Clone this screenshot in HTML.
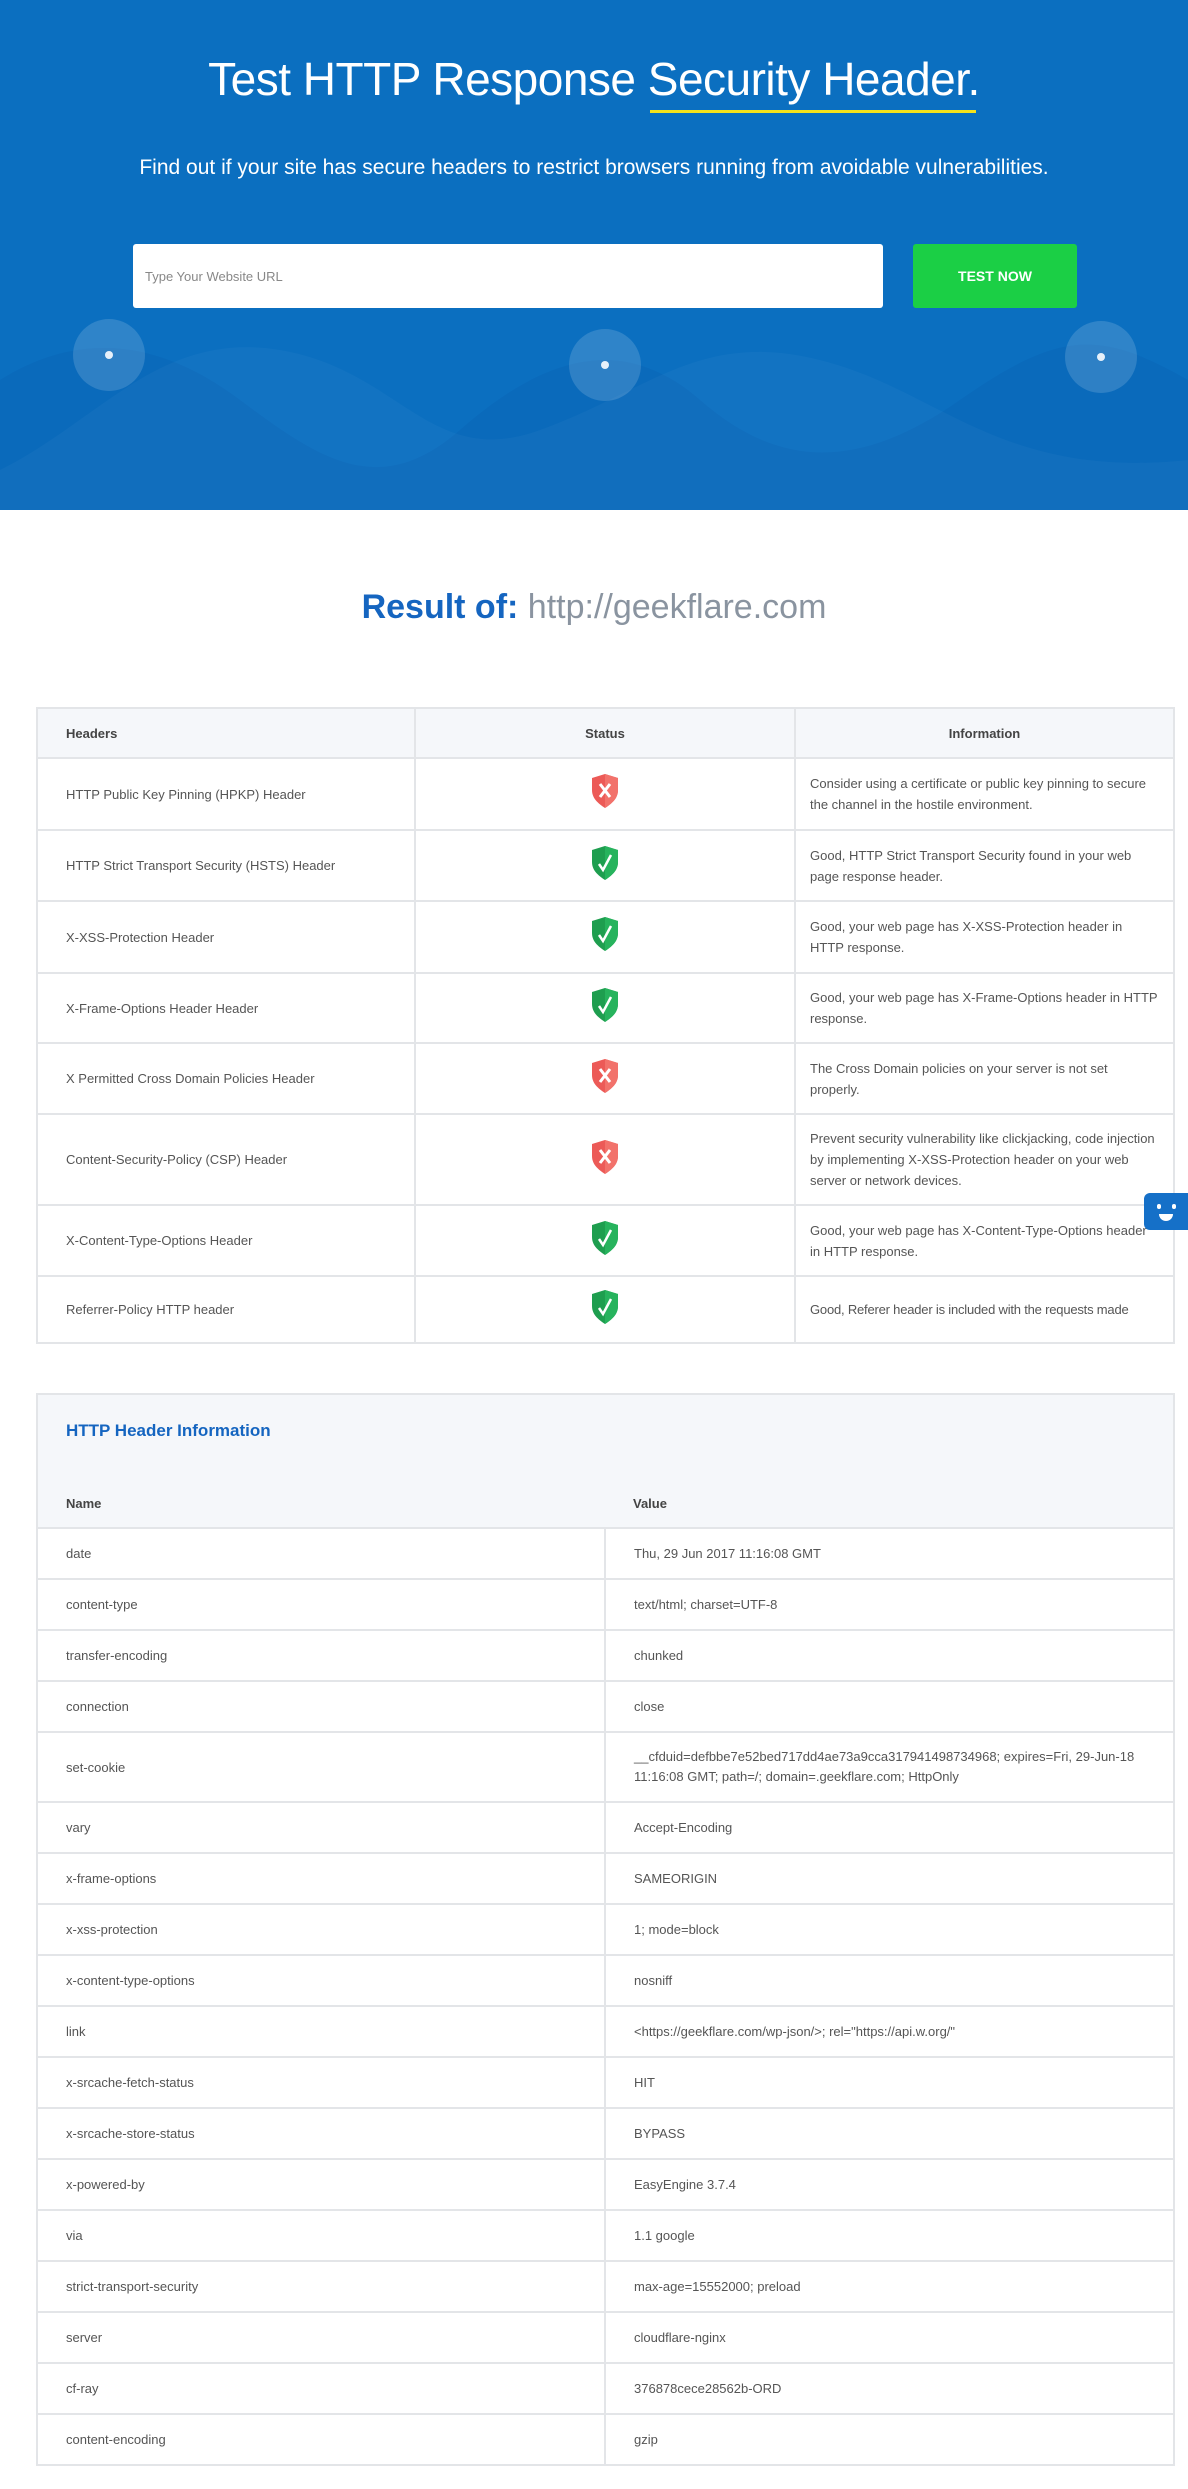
<!DOCTYPE html>
<html><head><meta charset="utf-8"><style>
*{box-sizing:border-box;margin:0;padding:0}
body{width:1188px;height:2489px;background:#fff;font-family:"Liberation Sans",sans-serif;color:#555;position:relative;overflow:hidden}
.hero{position:absolute;left:0;top:0;width:1188px;height:510px;background:#0b6fc0;overflow:hidden}
h1{position:absolute;top:52px;left:0;width:1188px;text-align:center;color:#fff;font-size:46px;font-weight:normal;letter-spacing:-0.5px}
.ul{position:absolute;left:650px;top:110px;width:326px;height:3px;background:#f5e21b}
.sub{position:absolute;top:156px;left:0;width:1188px;text-align:center;color:#fff;font-size:21px}
.inp{position:absolute;left:133px;top:244px;width:750px;height:64px;background:#fff;border-radius:3px;font-size:13px;color:#888;padding:25px 12px}
.btn{position:absolute;left:913px;top:244px;width:164px;height:64px;background:#1bcf45;border-radius:3px;color:#fff;font-size:14px;font-weight:bold;text-align:center;line-height:64px}
.circ{position:absolute;width:72px;height:72px;border-radius:50%;background:rgba(255,255,255,.15)}
.circ:after{content:"";position:absolute;left:32px;top:32px;width:8px;height:8px;border-radius:50%;background:#e6f0fa}
.res{position:absolute;top:588px;left:0;width:1188px;text-align:center;font-size:34px;color:#1565c0;font-weight:bold}
.res span{color:#8a94a0;font-weight:normal}
table{position:absolute;left:36px;width:1139px;border-collapse:collapse;font-size:13px}
td,th{border:2px solid #e3e5e8;padding:0 28px;color:#555;text-align:left}
th{background:#f5f7fa;font-weight:bold;color:#444;font-size:13px}
.t1 td{line-height:21px}
.t1 td:nth-child(2),.t1 th:nth-child(2){text-align:center}
.t1 td:nth-child(3){padding:0 14px}
.t2 td{height:51px}
.chat{position:absolute;left:1144px;top:1193px;width:44px;height:37px;background:#1570c8;border-radius:6px 0 0 6px}
</style></head><body>
<div class="hero">
<svg width="1188" height="510" style="position:absolute;left:0;top:0">
<path d="M0 380 C80 330,160 340,240 400 S380 500,460 430 S620 330,700 400 S860 470,960 400 S1100 330,1188 380 L1188 510 L0 510Z" fill="rgba(0,40,120,0.06)"/>
<path d="M0 470 C100 420,160 330,280 350 S430 470,540 430 S700 330,820 360 S1000 480,1188 460 L1188 510 L0 510Z" fill="rgba(255,255,255,0.03)"/>
</svg>
<h1>Test HTTP Response Security Header.</h1><div class="ul"></div>
<div class="sub">Find out if your site has secure headers to restrict browsers running from avoidable vulnerabilities.</div>
<div class="inp">Type Your Website URL</div>
<div class="btn">TEST NOW</div>
<div class="circ" style="left:73px;top:319px"></div>
<div class="circ" style="left:569px;top:329px"></div>
<div class="circ" style="left:1065px;top:321px"></div>
</div>
<div class="res">Result of: <span>http://geekflare.com</span></div>
<svg width="0" height="0" style="position:absolute"><defs>
<g id="bad"><path d="M14 1 L27 5 L27 17 C27 26,20 31,14 35 C8 31,1 26,1 17 L1 5Z" fill="#ec5a57"/><path d="M14 1 L27 5 L27 17 C27 26,20 31,14 35Z" fill="#f2726b"/><path d="M9 11 L19 24 M19 11 L9 24" stroke="#fff" stroke-width="3"/></g>
<g id="ok"><path d="M14 1 L27 5 L27 17 C27 26,20 31,14 35 C8 31,1 26,1 17 L1 5Z" fill="#1e9e4f"/><path d="M14 1 L27 5 L27 17 C27 26,20 31,14 35Z" fill="#27b35d"/><path d="M8 19 L12 25 L20 10" stroke="#fff" stroke-width="2.5" fill="none"/></g>
</defs></svg>
<table class="t1" style="top:707px">
<tr style="height:50px"><th style="width:378px">Headers</th><th style="width:380px">Status</th><th style="text-align:center">Information</th></tr>
<tr style="height:72px"><td>HTTP Public Key Pinning (HPKP) Header</td><td><svg width="28" height="36"><use href="#bad"/></svg></td><td>Consider using a certificate or public key pinning to secure the channel in the hostile environment.</td></tr>
<tr style="height:71px"><td>HTTP Strict Transport Security (HSTS) Header</td><td><svg width="28" height="36"><use href="#ok"/></svg></td><td>Good, HTTP Strict Transport Security found in your web page response header.</td></tr>
<tr style="height:72px"><td>X-XSS-Protection Header</td><td><svg width="28" height="36"><use href="#ok"/></svg></td><td>Good, your web page has X-XSS-Protection header in HTTP response.</td></tr>
<tr style="height:70px"><td>X-Frame-Options Header Header</td><td><svg width="28" height="36"><use href="#ok"/></svg></td><td>Good, your web page has X-Frame-Options header in HTTP response.</td></tr>
<tr style="height:71px"><td>X Permitted Cross Domain Policies Header</td><td><svg width="28" height="36"><use href="#bad"/></svg></td><td>The Cross Domain policies on your server is not set properly.</td></tr>
<tr style="height:91px"><td>Content-Security-Policy (CSP) Header</td><td><svg width="28" height="36"><use href="#bad"/></svg></td><td>Prevent security vulnerability like clickjacking, code injection by implementing X-XSS-Protection header on your web server or network devices.</td></tr>
<tr style="height:71px"><td>X-Content-Type-Options Header</td><td><svg width="28" height="36"><use href="#ok"/></svg></td><td>Good, your web page has X-Content-Type-Options header in HTTP response.</td></tr>
<tr style="height:67px"><td>Referrer-Policy HTTP header</td><td><svg width="28" height="36"><use href="#ok"/></svg></td><td style="white-space:nowrap;letter-spacing:-0.2px">Good, Referer header is included with the requests made</td></tr>
</table>
<div style="position:absolute;left:36px;top:1393px;width:1139px;height:135px;background:#f5f7fa;border:2px solid #e3e5e8;border-bottom:none"></div>
<div style="position:absolute;left:66px;top:1421px;font-size:17px;font-weight:bold;color:#1565c0">HTTP Header Information</div>
<table class="t2" style="top:1480px">
<tr style="height:48px"><th style="width:568px;border-top:none;border-right:none">Name</th><th style="border-top:none;border-left:none">Value</th></tr>
<tr><td>date</td><td>Thu, 29 Jun 2017 11:16:08 GMT</td></tr>
<tr><td>content-type</td><td>text/html; charset=UTF-8</td></tr>
<tr><td>transfer-encoding</td><td>chunked</td></tr>
<tr><td>connection</td><td>close</td></tr>
<tr><td style="height:70px">set-cookie</td><td style="line-height:20px;padding-right:10px">__cfduid=defbbe7e52bed717dd4ae73a9cca317941498734968; expires=Fri, 29-Jun-18 11:16:08 GMT; path=/; domain=.geekflare.com; HttpOnly</td></tr>
<tr><td>vary</td><td>Accept-Encoding</td></tr>
<tr><td>x-frame-options</td><td>SAMEORIGIN</td></tr>
<tr><td>x-xss-protection</td><td>1; mode=block</td></tr>
<tr><td>x-content-type-options</td><td>nosniff</td></tr>
<tr><td>link</td><td>&lt;https://geekflare.com/wp-json/&gt;; rel="https://api.w.org/"</td></tr>
<tr><td>x-srcache-fetch-status</td><td>HIT</td></tr>
<tr><td>x-srcache-store-status</td><td>BYPASS</td></tr>
<tr><td>x-powered-by</td><td>EasyEngine 3.7.4</td></tr>
<tr><td>via</td><td>1.1 google</td></tr>
<tr><td>strict-transport-security</td><td>max-age=15552000; preload</td></tr>
<tr><td>server</td><td>cloudflare-nginx</td></tr>
<tr><td>cf-ray</td><td>376878cece28562b-ORD</td></tr>
<tr><td>content-encoding</td><td>gzip</td></tr>
</table>
<div class="chat"><div style="position:absolute;left:13px;top:11px;width:4px;height:5px;background:#fff;border-radius:2px"></div><div style="position:absolute;left:28px;top:11px;width:4px;height:5px;background:#fff;border-radius:2px"></div><div style="position:absolute;left:15px;top:21px;width:14px;height:7px;background:#fff;border-radius:0 0 7px 7px"></div></div>
</body></html>
